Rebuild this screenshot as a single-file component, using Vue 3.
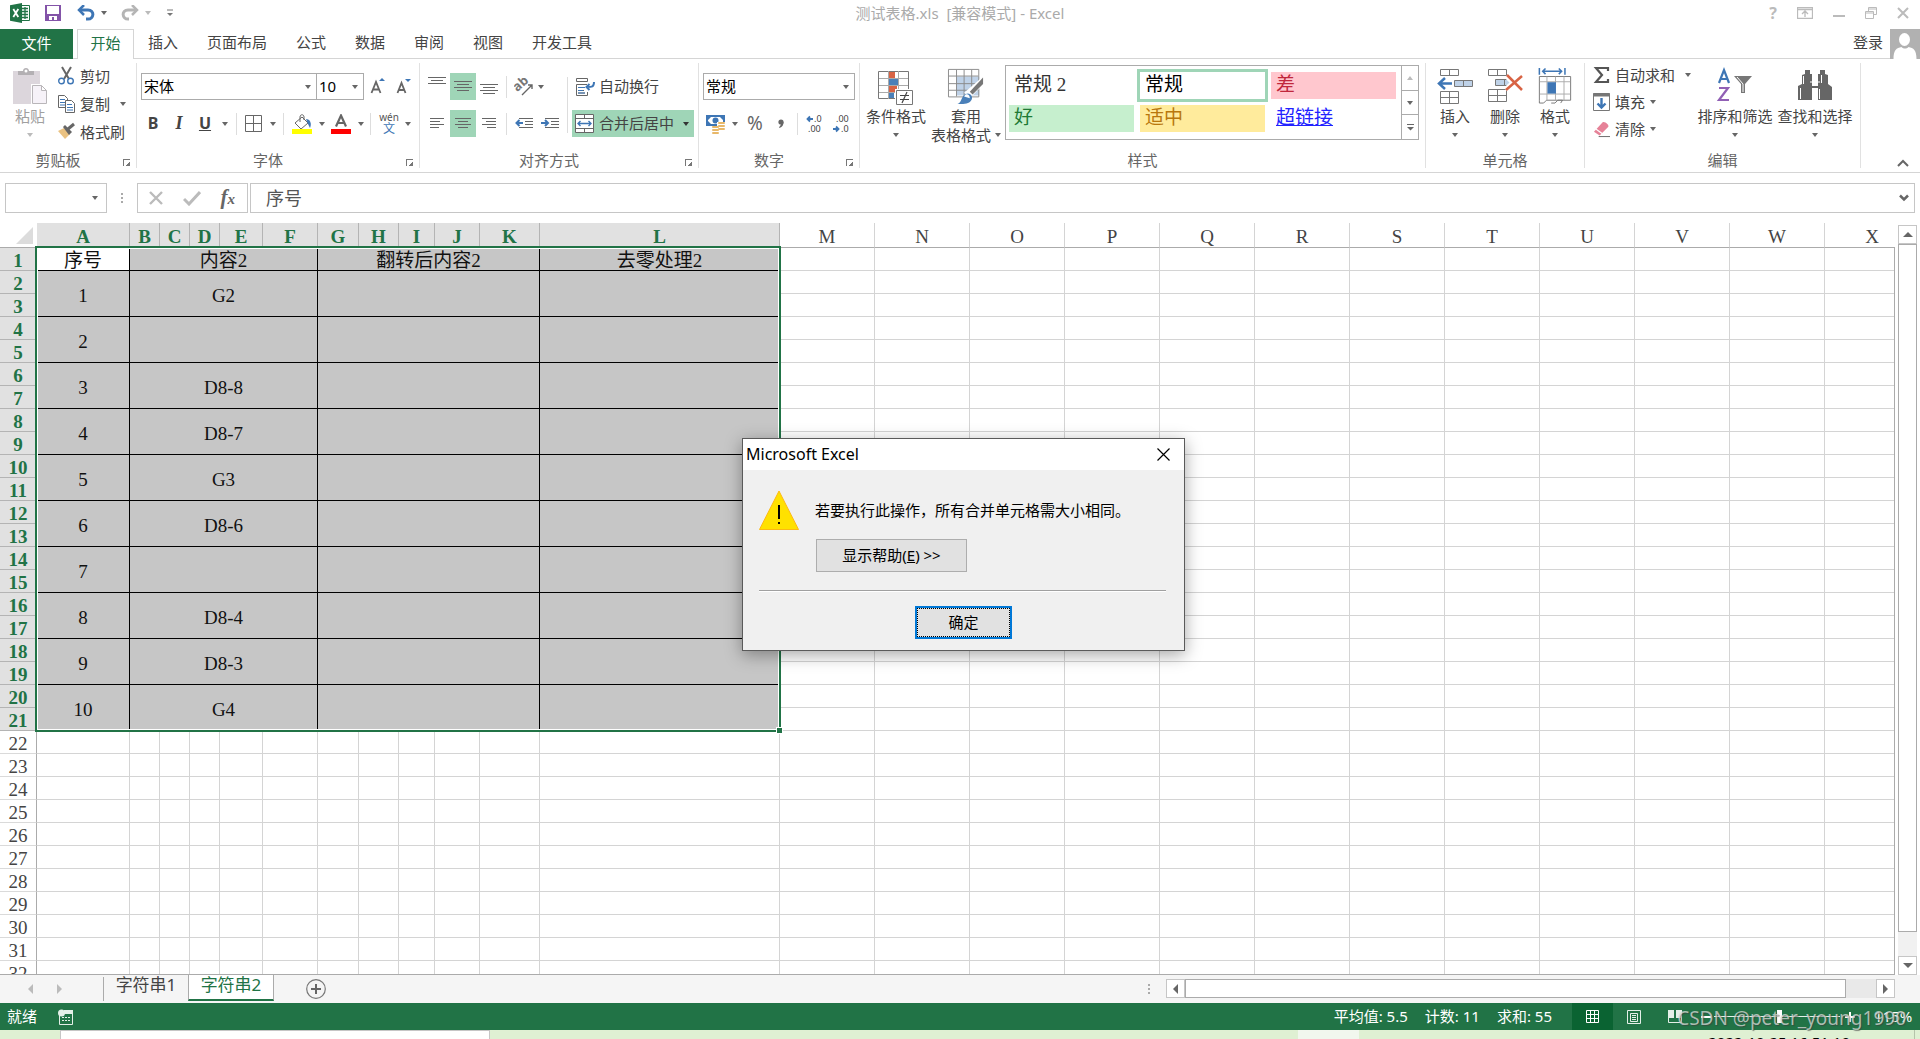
<script setup>
const tabs = ['开始', '插入', '页面布局', '公式', '数据', '审阅', '视图', '开发工具']

const columns = [
  ['A', 93], ['B', 30], ['C', 30], ['D', 30], ['E', 43], ['F', 55], ['G', 41], ['H', 40],
  ['I', 36], ['J', 45], ['K', 60], ['L', 240], ['M', 95], ['N', 95], ['O', 95], ['P', 95],
  ['Q', 95], ['R', 95], ['S', 95], ['T', 95], ['U', 95], ['V', 95], ['W', 95], ['X', 95],
].map(([name, width], i) => ({ name, width, selected: i < 12 }))

const values = ['G2', '', 'D8-8', 'D8-7', 'G3', 'D8-6', '', 'D8-4', 'D8-3', 'G4']

// Row 1 holds the captions; every record below it is merged over two rows.
const rows = Array.from({ length: 32 }, (_, i) => {
  const n = i + 1
  let merged = []
  if (n === 1) {
    merged = [
      { text: '序号', cols: 1, span: 1, active: true },
      { text: '内容2', cols: 5, span: 1 },
      { text: '翻转后内容2', cols: 5, span: 1 },
      { text: '去零处理2', cols: 1, span: 1 },
    ]
  } else if (n <= 21 && n % 2 === 0) {
    merged = [
      { text: String(n / 2), cols: 1, span: 2 },
      { text: values[n / 2 - 1], cols: 5, span: 2 },
      { text: '', cols: 5, span: 2 },
      { text: '', cols: 1, span: 2 },
    ]
  }
  return { n, merged, selected: n <= 21, blanks: n <= 21 ? 12 : 24 }
})
</script>

<template>
  <div class="app">
    <header class="titlebar">
      <div class="quick">
        <svg class="logo" width="20" height="20" viewBox="0 0 20 20">
          <path d="M11 2.500h8.500v15H11z" fill="#fff" stroke="#217346" />
          <path d="M12 5.500h6M12 8.500h6M12 11.500h6M12 14.500h6M15 4v12" stroke="#217346" stroke-width="1.300" />
          <path d="M0 2.200 12 0v20L0 17.800z" fill="#217346" />
          <path d="m3.300 6 5 8M8.300 6l-5 8" stroke="#fff" stroke-width="1.800" />
        </svg>
        <button class="qbtn" aria-label="保存">
          <svg width="16" height="16" viewBox="0 0 16 16"><path d="M0 0h16v16H0z" fill="#8353a8" /><path d="M2 1h12v8H2zM4 11h8v4H9v-3H7v3H4z" fill="#fff" /></svg>
        </button>
        <button class="qbtn undo" aria-label="撤消">
          <svg width="18" height="16" viewBox="0 0 18 16" fill="none" stroke="#3e76b5"><path d="M3 5h8c7 0 6 9 0 9H9" stroke-width="3" /><path d="M7 0 2 5l5 5" stroke-width="2.500" /></svg>
          <i class="caret"></i>
        </button>
        <button class="qbtn redo" aria-label="恢复">
          <svg width="18" height="16" viewBox="0 0 18 16" fill="none" stroke="#b5b5b5"><path d="M15 5H7c-7 0-6 9 0 9h1" stroke-width="3" /><path d="m11 0 5 5-5 5" stroke-width="2.500" /></svg>
          <i class="caret pale"></i>
        </button>
        <button class="qbtn" aria-label="自定义快速访问工具栏">
          <svg width="6" height="8" viewBox="0 0 6 8"><path d="M0 1h6" stroke="#777" /><path d="M0 4h6L3 7z" fill="#777" /></svg>
        </button>
      </div>
      <div class="doctitle">测试表格.xls&nbsp; [兼容模式] - Excel</div>
      <div class="window">
        <button aria-label="帮助" class="help">?</button>
        <button aria-label="功能区显示选项">
          <svg width="16" height="12" viewBox="0 0 16 12" fill="none" stroke="#bbb"><path d="M.5.500h15v11H.5zM0 2.500h16M8 10V4M5 7l3-3 3 3" stroke-width="1.300" /></svg>
        </button>
        <button aria-label="最小化"><svg width="12" height="12" viewBox="0 0 12 12"><path d="M0 9h12" stroke="#bbb" stroke-width="2" /></svg></button>
        <button aria-label="还原"><svg width="12" height="12" viewBox="0 0 12 12" fill="none" stroke="#bbb"><path d="M.5 4.500h8v7h-8zM.5 6h8M3.500 4V.500h8v7H9M3.500 2h8" /></svg></button>
        <button aria-label="关闭"><svg width="12" height="12" viewBox="0 0 12 12"><path d="m1 1 10 10M11 1 1 11" stroke="#bbb" stroke-width="2" /></svg></button>
      </div>
    </header>

    <nav class="tabs">
      <button class="file">文件</button>
      <button v-for="(t, i) in tabs" :key="t" class="tab" :class="{ active: i === 0 }">{{ t }}</button>
      <span class="grow"></span>
      <a href="#" class="login">登录</a>
      <svg class="avatar" width="30" height="30" viewBox="0 0 30 30"><path d="M0 0h30v30H0z" fill="#b1b1b1" /><ellipse cx="14.500" cy="10.500" rx="5.500" ry="6.500" fill="#fff" /><path d="M3.500 30c0-9 3-11 8-12 2 2 5 2 7 0 5 1 8 3 8 12z" fill="#fff" /></svg>
    </nav>

    <section class="ribbon">
      <div class="group clipboard">
        <div class="body">
          <button class="big paste">
            <svg width="36" height="36" viewBox="0 0 36 36"><path d="M1 3h27v33H1z" fill="#dcd6dc" /><path d="M6 7V3h5c0-4 6-4 6 0h5v4z" fill="#b3b0b3" /><circle cx="14" cy="3" r="1.500" fill="#fff" /><path d="M19 16h11l6 6v15H19z" fill="#fff" /><path d="M20.500 17.500h9l5 5v13h-14zM29.500 17.500v5h5" fill="#f6f2f8" stroke="#b9b6b9" /></svg>
            <span>粘贴</span><i class="caret pale"></i>
          </button>
          <div class="stack">
            <button class="line">
              <svg width="17" height="18" viewBox="0 0 17 18" fill="none"><path d="m4 0 7 12M13 0 6 12" stroke="#666" stroke-width="2" /><circle cx="3.500" cy="14" r="2.800" stroke="#3e76b5" stroke-width="1.400" /><circle cx="12.500" cy="14" r="2.800" stroke="#3e76b5" stroke-width="1.400" /></svg>
              <span>剪切</span>
            </button>
            <button class="line">
              <svg width="17" height="18" viewBox="0 0 17 18" fill="#fff" stroke="#666"><path d="M.5.500h6l3 3v9h-9z" /><path d="M2 4.500h5M2 7.500h5M2 10h5" stroke="#3e76b5" /><path d="M7.500 5.500h6l3 3v9h-9z" /><path d="M9 9.500h5M9 12.500h6M9 15h6" stroke="#3e76b5" /></svg>
              <span>复制</span><i class="caret far"></i>
            </button>
            <button class="line">
              <svg width="17" height="16" viewBox="0 0 17 16"><path d="m0 7 6-3 6 6-5 5z" fill="#eac282" /><path d="m5 3 2-2 7 7-3 3z" fill="#666" /><path d="m10 5 6-5" stroke="#666" stroke-width="3" /></svg>
              <span>格式刷</span>
            </button>
          </div>
        </div>
        <div class="label"><span>剪贴板</span><i class="launch"></i></div>
      </div>

      <div class="group font">
        <div class="body rows">
          <div class="row">
            <div class="combo wide"><select aria-label="字体"><option>宋体</option></select><i class="caret"></i></div>
            <div class="combo size"><select aria-label="字号"><option>10</option></select><i class="caret"></i></div>
            <button class="t w28" aria-label="增大字号"><svg width="16" height="18" viewBox="0 0 16 18"><path d="m1.500 15 4.500-11 4.500 11M3 11.500h6" fill="none" stroke="#666" stroke-width="1.800" /><path d="m9 3 3-3 3 3z" fill="#3e76b5" /></svg></button>
            <button class="t w24" aria-label="减小字号"><svg width="16" height="18" viewBox="0 0 16 18"><path d="m1.500 15 4-10 4 10M3 12h5" fill="none" stroke="#666" stroke-width="1.800" /><path d="m9 1 3 3 3-3z" fill="#3e76b5" /></svg></button>
          </div>
          <div class="row">
            <button class="t w24 bold">B</button>
            <button class="t w28 bold italic">I</button>
            <button class="t w24 bold under">U</button>
            <button class="t w16" aria-label="下划线选项"><i class="caret"></i></button>
            <i class="sep"></i>
            <button class="t w26" aria-label="边框"><svg width="17" height="17" viewBox="0 0 17 17"><path d="M.5.500h16v16H.5zM8.500 0v17M0 8.500h17" fill="none" stroke="#666" /></svg></button>
            <button class="t w14" aria-label="边框选项"><i class="caret"></i></button>
            <i class="sep"></i>
            <button class="t w30" aria-label="填充颜色"><svg width="20" height="20" viewBox="0 0 20 20"><path d="m3 9 7-6 6 6-7 6z" fill="#fff" stroke="#666" /><path d="M8 8V3c0-3 4-3 4 0v3" fill="none" stroke="#666" /><path d="M14 5c4 0 6 4 4 9l-2-4z" fill="#3e76b5" /><path d="M0 15h20v5H0z" fill="#ff0" /></svg></button>
            <button class="t w10" aria-label="填充选项"><i class="caret"></i></button>
            <button class="t w28" aria-label="字体颜色"><svg width="20" height="20" viewBox="0 0 20 20"><path d="m5 12.500 5-11 5 11M7 9h6" fill="none" stroke="#666" stroke-width="2.200" /><path d="M0 15h20v5H0z" fill="red" /></svg></button>
            <button class="t w12" aria-label="颜色选项"><i class="caret"></i></button>
            <i class="sep"></i>
            <button class="t w30 pinyin"><small>wén</small><b>文</b></button>
            <button class="t w8" aria-label="拼音选项"><i class="caret"></i></button>
          </div>
        </div>
        <div class="label"><span>字体</span><i class="launch"></i></div>
      </div>

      <div class="group align">
        <div class="body">
          <div class="rows">
            <div class="row">
              <button class="t w26 high" aria-label="顶端对齐"><svg width="18" height="8" viewBox="0 0 18 8"><path d="M0 .5h18M3 3.500h12M0 6.500h18" stroke="#666" /></svg></button>
              <button class="t w26 on" aria-label="垂直居中"><svg width="18" height="11" viewBox="0 0 18 11"><path d="M0 .5h18M3 3.500h12M0 6.500h18M3 9.500h12" stroke="#666" /></svg></button>
              <button class="t w26 low" aria-label="底端对齐"><svg width="18" height="11" viewBox="0 0 18 11"><path d="M0 .5h18M3 3.500h12M0 6.500h18M3 9.500h12" stroke="#666" /></svg></button>
              <i class="sep s9"></i>
              <button class="t w26" aria-label="方向"><svg width="20" height="18" viewBox="0 0 20 18"><text x="1" y="12" font-size="13" font-family="Noto Sans" font-weight="bold" fill="#777" transform="rotate(-42 5 10)">ab</text><path d="m8 17 10-10M14 7h4v4" fill="none" stroke="#666" stroke-width="1.400" /></svg></button>
              <button class="t w8" aria-label="方向选项"><i class="caret"></i></button>
            </div>
            <div class="row">
              <button class="t w26" aria-label="左对齐"><svg width="14" height="11" viewBox="0 0 14 11"><path d="M0 .5h14M0 3.500h10M0 6.500h14M0 9.500h9" stroke="#666" /></svg></button>
              <button class="t w26 on" aria-label="居中"><svg width="16" height="11" viewBox="0 0 16 11"><path d="M0 .5h16M3 3.500h10M0 6.500h16M3 9.500h10" stroke="#666" /></svg></button>
              <button class="t w26" aria-label="右对齐"><svg width="14" height="11" viewBox="0 0 14 11"><path d="M0 .5h14M4 3.500h10M0 6.500h14M5 9.500h9" stroke="#666" /></svg></button>
              <i class="sep s9"></i>
              <button class="t w26" aria-label="减少缩进"><svg width="18" height="11" viewBox="0 0 18 11"><path d="M4 .5h14M10 3.500h8M10 6.500h8M4 9.500h14" stroke="#666" /><path d="M8 5H2M4.500 2l-3 3 3 3" fill="none" stroke="#3e76b5" stroke-width="2" /></svg></button>
              <button class="t w26" aria-label="增加缩进"><svg width="18" height="11" viewBox="0 0 18 11"><path d="M4 .5h14M10 3.500h8M10 6.500h8M4 9.500h14" stroke="#666" /><path d="M0 5h6M4 2l3 3-3 3" fill="none" stroke="#3e76b5" stroke-width="2" /></svg></button>
            </div>
          </div>
          <i class="sep s9 tall"></i>
          <div class="rows">
            <button class="t text"><svg width="20" height="18" viewBox="0 0 20 18" fill="none" stroke="#666"><path d="M1.500.500h11v3h-11zM12 6.500H1.500v11h11V14M3 9.500h7M3 12.500h6M3 15h7" /><path d="M3 9.500h7M3 12.500h5M3 15h7" stroke="#3e76b5" /><path d="M19 4c0 5-2 5-7 5M14.500 6l-3 3 3 3" stroke="#3e76b5" stroke-width="2" /></svg><span>自动换行</span></button>
            <button class="t text on"><svg width="20" height="19" viewBox="0 0 20 19" fill="#fff" stroke="#666"><path d="M.5.500h18v18H.5zM0 4.500h19M0 14.500h19M9.500 0v4M9.500 15v4" /><path d="M3 9.500h13M5.500 7 3 9.500 5.500 12M13.500 7 16 9.500 13.500 12" fill="none" stroke="#3e76b5" stroke-width="1.400" /></svg><span>合并后居中</span><i class="caret dark"></i></button>
          </div>
        </div>
        <div class="label"><span>对齐方式</span><i class="launch"></i></div>
      </div>

      <div class="group number">
        <div class="body rows">
          <div class="combo full"><select aria-label="数字格式"><option>常规</option></select><i class="caret"></i></div>
          <div class="row">
            <button class="t w26" aria-label="会计数字格式"><svg width="20" height="20" viewBox="0 0 20 20"><path d="M0 1h19v11H0z" fill="#3e76b5" /><path d="M2 3h15v7H2z" fill="#fff" /><path d="M2 3h3L2 6zM17 3h-3l3 3zM2 10h3L2 7z" fill="#3e76b5" /><circle cx="9.500" cy="6.500" r="3" fill="#3e76b5" /><path d="M11 8h8v9h-5v3H6v-8h5z" fill="#fff" /><g fill="#e8b86a"><rect x="12" y="8" width="7" height="2" rx="1" /><rect x="12" y="11" width="7" height="2" rx="1" /><rect x="12" y="14" width="7" height="2" rx="1" /><rect x="6" y="12" width="7" height="2" rx="1" /><rect x="6" y="15" width="7" height="2" rx="1" /><rect x="6" y="18" width="7" height="2" rx="1" /></g></svg></button>
            <button class="t w12" aria-label="货币选项"><i class="caret"></i></button>
            <button class="t w28 percent">%</button>
            <button class="t w24" aria-label="千位分隔样式"><svg width="6" height="10" viewBox="0 0 6 10"><circle cx="3" cy="3" r="2.600" fill="#666" /><path d="M5.500 3c0 3-1 5-4 6l-.5-1c1-.5 2-2 2-4z" fill="#666" /></svg></button>
            <i class="sep s9"></i>
            <button class="t w26" aria-label="增加小数位数"><svg class="deci" width="18" height="18" viewBox="0 0 18 18"><text x="8" y="7">.0</text><text x="2" y="17">.00</text><path d="M7 4H2M4 1.500 1.500 4 4 6.500" fill="none" stroke="#3e76b5" stroke-width="1.800" /></svg></button>
            <button class="t w26" aria-label="减少小数位数"><svg class="deci" width="18" height="18" viewBox="0 0 18 18"><text x="4" y="7">.00</text><text x="9" y="17">.0</text><path d="M1 14h5M4 11.500 6.500 14 4 16.500" fill="none" stroke="#3e76b5" stroke-width="1.800" /></svg></button>
          </div>
        </div>
        <div class="label"><span>数字</span><i class="launch"></i></div>
      </div>

      <div class="group styles">
        <div class="body">
          <button class="big w72">
            <svg width="38" height="36" viewBox="0 0 38 36"><path d="M1.500 3.500h30v27h-30z" fill="#fff" stroke="#777" /><path d="M2 10.500h29M2 17.500h29M2 24.500h29M11.500 3v28M21.500 3v28" stroke="#aaa" /><path d="M12 4h6v6h-6zM12 18h8v6h-8z" fill="#d86344" /><path d="M12 11h9v6h-9zM12 25h5v5h-5z" fill="#4a80b9" /><path d="M18 21h20v15H18z" fill="#fff" /><path d="M19.500 22.500h16v14h-16z" fill="#fff" stroke="#777" /><path d="M23 27.500h9M23 31.500h9M30 24l-5 11" stroke="#444" stroke-width="1.200" /></svg>
            <span>条件格式</span><i class="caret"></i>
          </button>
          <button class="big w68">
            <svg width="38" height="38" viewBox="0 0 38 38"><path d="M9 9h24v20H9z" fill="#bfd2e8" /><path d="M.5 1.500h32v29H.5zM9 2v28M17 2v28M25 2v28M1 8.500h31M1 16.500h31M1 23.500h31" fill="none" stroke="#8a8a8a" /><path d="m37 9 1 8-14 14-7-5z" fill="#fff" /><path d="m37 10-14 15 3 3 11-11z" fill="#777" /><path d="M10 38c5-1 4-11 11-11 7 1 6 11-5 11z" fill="#4a80b9" /><path d="M17 30c2-4 6-2 6 2z" fill="#fff" /></svg>
            <span>套用</span><span class="second">表格格式<i class="caret"></i></span>
          </button>
          <div class="gallery">
            <div class="swatches">
              <button>常规 2</button><button class="current">常规</button><button class="bad">差</button>
              <button class="good">好</button><button class="neutral">适中</button><button class="linked">超链接</button>
            </div>
            <div class="spin">
              <button aria-label="上一行"><i class="caret up pale"></i></button>
              <button aria-label="下一行"><i class="caret"></i></button>
              <button aria-label="其他样式"><svg width="7" height="7" viewBox="0 0 7 7"><path d="M0 .5h7" stroke="#666" /><path d="M0 3h7L3.500 6.500z" fill="#666" /></svg></button>
            </div>
          </div>
        </div>
        <div class="label"><span>样式</span></div>
      </div>

      <div class="group cells">
        <div class="body">
          <button class="big w50">
            <svg width="36" height="36" viewBox="0 0 36 36" fill="#fff" stroke="#777"><path d="M3.500 1.500h18v6h-18zM12.500 2v5M3.500 23.500h18v12h-18zM12.500 23v12M3 29.500h18" /><path d="M17.500 12.500h18v6h-18zM26.500 13v5" fill="#bfd2e8" /><path d="M15 15.500H3M8 10l-6 5.500L8 21" fill="none" stroke="#3e76b5" stroke-width="2.500" /></svg>
            <span>插入</span><i class="caret"></i>
          </button>
          <button class="big w50">
            <svg width="36" height="36" viewBox="0 0 36 36" fill="#fff" stroke="#777"><path d="M1.500 1.500h18v6h-18zM10.500 2v5M1.500 21.500h18v12h-18zM10.500 21v12M1 27.500h18" /><path d="M8.500 11.500h16v6h-16zM17.500 12v5" fill="#bfd2e8" /><path d="m20 8 15 15M34 8 19 22" stroke="#fff" stroke-width="6" /><path d="m20 7 15 15M35 8 19 22" stroke="#d86344" stroke-width="2.500" /></svg>
            <span>删除</span><i class="caret"></i>
          </button>
          <button class="big w50">
            <svg width="36" height="38" viewBox="0 0 36 38" fill="#fff" stroke="#777"><path d="M1.500 34v-25h33v25H9l-3 3H1.500zM14 37h4l3-3h5l-2 3" /><path d="M2 14.500h32M2 27.500h32M9.500 9v25M18.500 9v25M27.500 9v25" stroke="#aaa" /><path d="M10 15h9v12h-9z" fill="#3e76b5" stroke="none" /><path d="M1.500 0v7M28.500 0v7M5 3.500h20M8 .5l-3 3 3 3M22 .5l3 3-3 3" fill="none" stroke="#3e76b5" stroke-width="1.600" /></svg>
            <span>格式</span><i class="caret"></i>
          </button>
        </div>
        <div class="label"><span>单元格</span></div>
      </div>

      <div class="group editing">
        <div class="body">
          <div class="stack">
            <button class="line"><svg width="17" height="18" viewBox="0 0 17 18"><path d="M15 5V2H3l6 7-6 7h12v-3" fill="none" stroke="#555" stroke-width="2.200" /></svg><span>自动求和</span><i class="caret far"></i></button>
            <button class="line"><svg width="17" height="18" viewBox="0 0 17 18"><path d="M.5.500h16v17H.5z" fill="#fff" stroke="#777" /><path d="M0 2h17" stroke="#777" stroke-width="3" /><path d="M8.500 5v9M4.500 10.500l4 4 4-4" fill="none" stroke="#3e76b5" stroke-width="2.400" /></svg><span>填充</span><i class="caret"></i></button>
            <button class="line"><svg width="18" height="18" viewBox="0 0 18 18"><path d="m1 12 9-10c2-2 8 3 6 5L7 16z" fill="#e68298" /><path d="m3 9 7 5" stroke="#fff" stroke-width="1.300" /><path d="M6 17h12" stroke="#666" /></svg><span>清除</span><i class="caret"></i></button>
          </div>
          <button class="big w80">
            <svg width="36" height="36" viewBox="0 0 36 36" fill="none"><path d="m2 15 5-13 5 13M4 11h7" stroke="#3e76b5" stroke-width="2.200" /><path d="M2 20h9L2 32h10" stroke="#9160b5" stroke-width="2.200" /><path d="M17 8h18l-7 8v9h-4v-9z" fill="#777" /><path d="m20 9 6 7v8" stroke="#fff" /></svg>
            <span>排序和筛选</span><i class="caret"></i>
          </button>
          <button class="big w80">
            <svg width="36" height="36" viewBox="0 0 36 36" fill="#666"><path d="M8 2h5v4h2v12h6V6h2V2h5v4l3 1v9l4 3v13H21V20h-6v12H1V18l4-2V7l3-1z" /><path d="M13 14h10M3.500 20v11M22.500 21v10M6.500 8v8M24.500 7v8" stroke="#fff" /><path d="M15 6h6v6h-6z" fill="#fff" /></svg>
            <span>查找和选择</span><i class="caret"></i>
          </button>
        </div>
        <div class="label"><span>编辑</span></div>
      </div>
      <button class="collapse" aria-label="折叠功能区"><svg width="12" height="8" viewBox="0 0 12 8"><path d="m1 7 5-5 5 5" fill="none" stroke="#666" stroke-width="2" /></svg></button>
    </section>

    <section class="formula">
      <div class="namebox"><input aria-label="名称框" /><i class="caret"></i></div>
      <i class="dots"></i>
      <div class="fx">
        <button aria-label="取消"><svg width="16" height="16" viewBox="0 0 16 16"><path d="m2 2 12 12M14 2 2 14" stroke="#bbb" stroke-width="2.400" /></svg></button>
        <button aria-label="输入"><svg width="18" height="16" viewBox="0 0 18 16"><path d="m1 9 5 5L17 2" fill="none" stroke="#bbb" stroke-width="3" /></svg></button>
        <button class="fn">f<sub>x</sub></button>
      </div>
      <div class="entry">
        <input aria-label="编辑栏" value="序号" />
        <svg width="10" height="8" viewBox="0 0 10 8"><path d="m1 1.500 4 4 4-4" fill="none" stroke="#666" stroke-width="2.500" /></svg>
      </div>
    </section>

    <main class="sheet">
      <div class="grid">
        <table>
          <colgroup>
            <col class="rowhead" />
            <col v-for="c in columns" :key="c.name" :style="{ width: c.width + 'px' }" />
          </colgroup>
          <thead>
            <tr>
              <th class="corner"><svg width="17" height="17" viewBox="0 0 17 17"><path d="M17 0v17H0z" fill="#dcdcdc" /></svg></th>
              <th v-for="c in columns" :key="c.name" :class="{ sel: c.selected }">{{ c.name }}</th>
            </tr>
          </thead>
          <tbody>
            <tr v-for="r in rows" :key="r.n">
              <th :class="{ sel: r.selected }">{{ r.n }}</th>
              <td v-for="(m, i) in r.merged" :key="'m' + i" class="picked" :class="{ active: m.active, heading: r.n === 1 }" :colspan="m.cols" :rowspan="m.span">{{ m.text }}</td>
              <td v-for="b in r.blanks" :key="b"></td>
            </tr>
          </tbody>
        </table>
        <div class="selection"><i></i></div>
      </div>
      <div class="vscroll">
        <button aria-label="向上滚动"><i class="arrow up"></i></button>
        <div class="thumb"></div>
        <button aria-label="向下滚动"><i class="arrow down"></i></button>
      </div>
    </main>

    <footer class="sheetbar">
      <div class="navs"><i class="arrow left"></i><i class="arrow right"></i></div>
      <button class="sheettab">字符串1</button>
      <button class="sheettab current">字符串2</button>
      <button class="plus" aria-label="新工作表"><svg width="20" height="20" viewBox="0 0 20 20"><circle cx="10" cy="10" r="9.300" fill="none" stroke="#777" stroke-width="1.200" /><path d="M10 5v10M5 10h10" stroke="#666" stroke-width="2" /></svg></button>
      <span class="grow"></span>
      <i class="dots"></i>
      <div class="hscroll">
        <button aria-label="向左滚动"><i class="arrow left"></i></button>
        <div class="thumb"></div>
        <button aria-label="向右滚动"><i class="arrow right"></i></button>
      </div>
    </footer>

    <footer class="status">
      <span class="ready">就绪</span>
      <svg width="16" height="16" viewBox="0 0 16 16"><path d="M1.500 3v12.500h13V4.500" fill="none" stroke="#e4efe8" /><path d="M6 1h9v4H6z" fill="#e4efe8" /><circle cx="3.500" cy="4" r="3.500" fill="#e4efe8" /><path d="M4 8.500h9M4 11.500h9" stroke="#e4efe8" stroke-dasharray="2 1" /></svg>
      <span class="grow"></span>
      <span class="stat">平均值: 5.5</span><span class="stat">计数: 11</span><span class="stat">求和: 55</span>
      <button class="view on" aria-label="普通"><svg width="14" height="14" viewBox="0 0 14 14"><path d="M.5.500h12v12H.5zM4.500 0v13M8.500 0v13M0 4.500h13M0 8.500h13" fill="none" stroke="#fff" /></svg></button>
      <button class="view" aria-label="页面布局"><svg width="14" height="14" viewBox="0 0 14 14"><path d="M.5.500h13v13H.5zM3.500 3.500h7v8h-7zM5 5.500h4M5 7.500h4M5 9.500h4" fill="none" stroke="#e4efe8" /></svg></button>
      <button class="view" aria-label="分页预览"><svg width="14" height="14" viewBox="0 0 14 14"><path d="M0 0h6v8H0zM8 0h6v8H8z" fill="#e4efe8" /><path d="M.5 0v12.500h13V0" fill="none" stroke="#e4efe8" /></svg></button>
      <button class="zoombtn" aria-label="缩小"><svg width="10" height="10" viewBox="0 0 10 10"><path d="M0 5h10" stroke="#fff" stroke-width="2" /></svg></button>
      <input class="zoom" type="range" min="0" max="100" value="52" aria-label="显示比例" />
      <button class="zoombtn" aria-label="放大"><svg width="10" height="10" viewBox="0 0 10 10"><path d="M0 5h10M5 0v10" stroke="#fff" stroke-width="2" /></svg></button>
      <span class="percentage">115%</span>
      <span class="watermark">CSDN @peter_young1990</span>
    </footer>

    <div class="taskbar">
      <div class="search"></div><div class="slot"></div><time>2022-10-25 16:51:19</time><i class="edge"></i>
    </div>

    <div class="dialog" role="alertdialog" aria-labelledby="dlg-title" aria-describedby="dlg-text">
      <div class="dlghead">
        <span id="dlg-title">Microsoft Excel</span>
        <button aria-label="关闭"><svg width="13" height="13" viewBox="0 0 13 13"><path d="m.5.500 12 12M12.500.500l-12 12" stroke="#000" stroke-width="1.200" /></svg></button>
      </div>
      <div class="dlgbody">
        <svg width="40" height="40" viewBox="0 0 40 40"><path d="M20 1 39.500 39.500H.5z" fill="#ffe100" stroke="#fdb913" /><path d="M20 15v14M20 32v2" stroke="#000" stroke-width="2" /></svg>
        <div class="message">
          <p id="dlg-text">若要执行此操作，所有合并单元格需大小相同。</p>
          <button class="showhelp">显示帮助(<u>E</u>) &gt;&gt;</button>
        </div>
      </div>
      <div class="dlgfoot"><button class="ok"><span>确定</span></button></div>
    </div>
  </div>
</template>

<style>
body { margin: 0; background: #fff; }
</style>

<style scoped>
.app { position: relative; display: flex; flex-direction: column; height: 100vh; overflow: hidden; font: 15px/20px "Noto Sans", "Noto Sans CJK SC", sans-serif; color: #444; background: #fff; }
.app *, .app *::before, .app *::after { box-sizing: border-box; }
button, input, select { font: inherit; color: inherit; background: none; border: 0; border-radius: 0; padding: 0; margin: 0; outline: 0; }
svg { display: block; flex: none; }
i { flex: none; }
.grow { flex: 1; }
.caret { display: block; width: 0; height: 0; border: 3px solid transparent; border-top: 4px solid #666; border-bottom: 0; }
.caret.pale { border-top-color: #bbb; }
.caret.dark { border-top-color: #333; }
.caret.up { border-top: 0; border-bottom: 4px solid #bbb; }
.dots { width: 2px; height: 11px; background: repeating-linear-gradient(#aaa 0 2px, transparent 2px 4px); }

.titlebar { flex: none; display: grid; grid-template-columns: 1fr auto 1fr; height: 29px; color: #aaa; }
.quick { display: flex; align-items: center; padding: 0 0 3px 10px; }
.qbtn { display: flex; align-items: center; gap: 6px; margin-left: 15px; }
.undo { margin-left: 16px; }
.redo { margin: 0 16px 0 14px; }
.redo + .qbtn { margin-left: 0; }
.doctitle { line-height: 26px; white-space: pre; }
.window { display: flex; align-items: center; justify-content: flex-end; gap: 20px; padding: 0 11px 3px 0; }
.help { font-weight: bold; font-size: 16px; color: #bbb; }

.tabs { flex: none; display: flex; height: 30px; border-bottom: 1px solid #d5d5d5; }
.file { width: 73px; height: 30px; margin-right: 4px; padding-bottom: 2px; color: #fff; background: #217346; }
.tab { padding: 0 15px 4px 14px; height: 29px; }
.tab.active { height: 30px; width: 57px; padding: 0 0 4px; background: #fff; border: 1px solid #d5d5d5; border-bottom: 0; color: #217346; }
.login { color: #444; text-decoration: none; line-height: 26px; margin-right: 7px; }

.ribbon { flex: none; display: flex; padding: 4px 0; height: 114px; border-bottom: 1px solid #d5d5d5; }
.group { display: flex; flex-direction: column; height: 105px; border-right: 1px solid #e1e1e1; }
.body { display: flex; flex: 1; align-items: flex-start; }
.label { display: flex; align-items: center; height: 20px; line-height: 24px; color: #666; }
.label span { flex: 1; text-align: center; padding-top: 4px; }
.launch { width: 7px; height: 7px; margin: 8px 6px 0 7px; border-top: 1px solid #777; border-left: 1px solid #777; background: linear-gradient(135deg, transparent 60%, #777 60%); }
.clipboard { width: 137px; }
.font { width: 283px; }
.align { width: 279px; }
.number { width: 161px; }
.styles { width: 566px; }
.cells { width: 159px; }
.editing { width: 276px; }
.big { display: flex; flex-direction: column; align-items: center; padding-top: 5px; white-space: nowrap; }
.big svg { height: 36px; margin-bottom: 2px; overflow: visible; }
.big > .caret { margin-top: 7px; }
.big .second { display: flex; align-items: center; gap: 4px; line-height: 18px; }
.paste { width: 50px; margin: 0 8px 0 5px; color: #a0a0a0; }
.stack { display: flex; flex-direction: column; gap: 8px; padding-top: 3px; }
.line { display: flex; align-items: center; gap: 5px; height: 20px; white-space: nowrap; }
.line svg { width: 17px; overflow: visible; }
.clipboard .stack { margin-left: -5px; }
.caret.far { margin-left: 5px; }
.rows { display: flex; flex-direction: column; gap: 10px; padding-top: 10px; }
.body.rows { padding-left: 4px; }
.align .body { padding-left: 4px; }
.row { display: flex; align-items: center; height: 27px; }
.t { display: flex; align-items: center; justify-content: center; flex: none; height: 27px; }
.w8 { width: 8px; } .w10 { width: 10px; } .w12 { width: 12px; } .w14 { width: 14px; } .w16 { width: 16px; }
.w24 { width: 24px; } .w26 { width: 26px; } .w28 { width: 28px; } .w30 { width: 30px; } .w50 { width: 50px; }
.w68 { width: 68px; } .w72 { width: 72px; } .w80 { width: 80px; }
.on { background: #9fd5b7; }
.high { align-items: flex-start; padding-top: 4px; }
.low { align-items: flex-end; padding-bottom: 5px; }
.bold { font-weight: bold; font-size: 16px; padding-bottom: 2px; }
.italic { font-style: italic; font-family: "Liberation Serif", serif; font-size: 18px; }
.under { text-decoration: underline; }
.sep { width: 7px; height: 22px; background: linear-gradient(#ddd, #ddd) center / 1px 100% no-repeat; }
.s9 { width: 9px; }
.tall { height: 56px; margin-top: 14px; }
.text { width: 122px; justify-content: flex-start; padding-left: 3px; gap: 4px; white-space: nowrap; }
.text span { padding-bottom: 2px; }
.text .caret { margin-left: 5px; }
.pinyin { flex-direction: column; color: #555; }
.pinyin small { font-size: 10px; line-height: 10px; }
.pinyin b { font-size: 12px; line-height: 14px; font-weight: normal; color: #3e76b5; }
.percent { font-size: 19px; color: #666; padding-bottom: 2px; }
.deci { font: 9px "Noto Sans", sans-serif; fill: #444; overflow: visible; }
.combo { display: flex; align-items: center; height: 27px; border: 1px solid #ababab; color: #000; }
.combo select { appearance: none; flex: 1; min-width: 0; height: 25px; padding: 0 0 2px 2px; }
.combo .caret { margin-right: 5px; }
.wide { width: 176px; }
.size { width: 48px; margin-left: -1px; }
.full { width: 152px; }
.gallery { display: flex; width: 414px; height: 75px; margin: 2px 0 0 5px; border: 1px solid #ababab; }
.swatches { flex: 1; display: grid; grid-template-columns: repeat(3, 125px); gap: 6px; align-content: start; padding: 6px 3px; font: 19px/27px "Liberation Serif", "Noto Sans CJK SC", serif; }
.swatches button { height: 27px; padding: 0 0 2px 5px; line-height: 25px; text-align: left; color: #333; white-space: pre; }
.swatches .current { color: #000; outline: 3px solid #9fd5b7; }
.swatches .bad { background: #ffc7ce; color: #c0283c; }
.swatches .good { background: #c6efce; color: #1f7a35; }
.swatches .neutral { background: #ffeb9c; color: #b8770c; }
.swatches .linked { color: #22f; text-decoration: underline; }
.spin { width: 17px; border-left: 1px solid #ababab; display: flex; flex-direction: column; }
.spin button { flex: 1; display: flex; align-items: center; justify-content: center; border-top: 1px solid #ababab; }
.spin button:first-child { border-top: 0; }
.cells .body { padding-left: 4px; }
.editing .body { padding-left: 8px; }
.editing .stack { width: 102px; padding-top: 2px; gap: 7px; }
.editing .line .caret { margin-left: 0; }
.editing .line .caret.far { margin-left: 5px; }
.collapse { margin: auto 11px 0 auto; padding-bottom: 1px; }

.formula { flex: none; display: flex; align-items: center; height: 50px; padding: 0 5px 0; }
.namebox, .fx, .entry { display: flex; align-items: center; height: 30px; border: 1px solid #c6c6c6; }
.namebox { width: 102px; }
.namebox input { flex: 1; min-width: 0; }
.namebox .caret { margin-right: 8px; }
.formula .dots { margin: 0 14px; }
.fx { width: 111px; justify-content: space-between; padding: 0 12px 0 10px; margin-right: 2px; }
.fn { font: italic bold 21px/24px "Liberation Serif", serif; color: #666; }
.fn sub { font-size: 15px; vertical-align: baseline; }
.entry { flex: 1; padding-right: 5px; }
.entry input { flex: 1; padding: 0 0 2px 15px; color: #555; font: 18px/26px "Noto Sans CJK SC", sans-serif; }

.sheet { flex: 1; min-height: 0; display: flex; }
.grid { position: relative; flex: 1; min-width: 0; overflow: hidden; border-bottom: 1px solid #ababab; }
.grid::after { content: ""; position: absolute; top: 24px; right: 0; bottom: 0; width: 1px; background: #ababab; }
table { table-layout: fixed; width: 1920px; border-collapse: separate; border-spacing: 0; font: 19px/18px "Liberation Serif", "Noto Sans CJK SC", serif; }
.rowhead { width: 37px; }
tr { height: 23px; }
thead tr { height: 25px; }
th { padding: 4px 0 0; font-weight: normal; color: #444; border-bottom: 1px solid #dadada; border-right: 1px solid #ababab; }
thead th { border-bottom-color: #ababab; border-right-color: #d4d4d4; }
th.sel { background: #e1e1e1; color: #217346; font-weight: bold; border-color: #b4b4b4; }
.corner { padding: 0; border-right-color: #fff; }
.corner svg { margin-left: 16px; }
td { padding: 0; text-align: center; color: #111; border-right: 1px solid #d4d4d4; border-bottom: 1px solid #d4d4d4; }
td.picked { background: #c6c6c6; border-color: #000; padding-top: 4px; }
td.picked.heading { padding-top: 3px; }
td.picked.active { background: #fff; }
.selection { position: absolute; left: 35px; top: 23px; width: 746px; height: 486px; border: 2px solid #217346; box-shadow: inset 0 0 0 1px #fff; }
.selection i { position: absolute; right: -4px; bottom: -4px; width: 7px; height: 7px; background: #217346; border: 1px solid #fff; }
.vscroll { width: 25px; padding: 2px 3px 0; display: flex; flex-direction: column; }
.vscroll button { flex: none; height: 19px; border: 1px solid #c6c6c6; background: #fff; display: flex; align-items: center; justify-content: center; }
.vscroll .thumb { flex: 1; margin-bottom: 24px; border: 1px solid #ababab; background: #fff; box-shadow: 0 24px #f1f1f1; }
.arrow { display: block; border: 5px solid transparent; width: 0; height: 0; }
.arrow.up { border-top: 0; border-bottom-color: #666; }
.arrow.down { border-bottom: 0; border-top-color: #666; }
.arrow.left { border-left: 0; border-right-color: #666; }
.arrow.right { border-right: 0; border-left-color: #666; }

.sheetbar { flex: none; display: flex; height: 28px; background: #f5f5f5; padding-right: 25px; }
.navs { display: flex; align-items: center; gap: 24px; width: 104px; height: 24px; margin-top: 2px; padding-left: 28px; border-right: 1px solid #ababab; }
.navs .arrow.left { border-right-color: #bbb; }
.navs .arrow.right { border-left-color: #bbb; }
.sheettab { width: 84px; padding-bottom: 8px; font-size: 17px; }
.sheettab.current { width: 86px; height: 27px; margin-top: -1px; padding-bottom: 4px; background: #fff; color: #217346; border: 1px solid #ababab; border-width: 0 1px 2px; border-bottom-color: #217346; }
.plus { margin-left: 32px; }
.sheetbar .dots { margin: 9px 16px 0 0; }
.hscroll { display: flex; width: 729px; margin-top: 4px; height: 19px; background: #e9e9e9; }
.hscroll button { flex: none; width: 19px; border: 1px solid #c6c6c6; background: #fff; display: flex; align-items: center; justify-content: center; }
.hscroll .thumb { flex: 1; margin-right: 30px; border: 1px solid #ababab; background: #fff; }

.status { flex: none; position: relative; display: flex; align-items: center; height: 27px; background: #217346; color: #fff; padding: 0 10px 0 7px; white-space: nowrap; }
.status > span { padding-bottom: 2px; }
.ready { margin-right: 21px; }
.stat { margin-right: 17px; }
.view.on { margin-left: 3px; }
.view { width: 41px; height: 27px; display: flex; align-items: center; justify-content: center; }
.view.on { background: #0a6332; }
.zoombtn { width: 10px; margin-left: 6px; }
.zoom { appearance: none; width: 126px; height: 14px; margin: 0 3px; background: linear-gradient(#e4efe8, #e4efe8) center / 100% 1px no-repeat; }
.zoom + .zoombtn { margin-left: 2px; }
.zoom::-webkit-slider-thumb { appearance: none; width: 5px; height: 13px; background: #fff; }
.percentage { width: 36px; margin-left: 19px; }
.watermark { position: absolute; right: 14px; top: 2px; font: 19px/26px "Noto Sans", sans-serif; color: rgba(215, 220, 216, .75); text-shadow: 1px 1px 1px rgba(60, 60, 60, .6); }

.taskbar { flex: none; display: flex; height: 9px; overflow: hidden; background: #dff0d3; }
.search { width: 430px; margin-left: 60px; border: 1px solid #c6c6c6; border-bottom: 0; background: #fff; }
.slot { width: 61px; margin-left: 808px; background: #f1f7ee; }
time { margin-left: auto; padding-top: 4px; margin-right: 64px; color: #000; line-height: 16px; white-space: nowrap; }
.edge { width: 1px; margin-right: 5px; background: #b5c4ab; }

.dialog { position: absolute; left: 742px; top: 438px; width: 443px; border: 1px solid #5a5a5a; background: #f0f0f0; color: #000; box-shadow: 0 4px 16px rgba(0, 0, 0, .35); }
.dlghead { display: flex; align-items: center; justify-content: space-between; height: 31px; padding: 0 14px 0 3px; background: #fff; }
.dlghead span { font-size: 16px; padding-bottom: 2px; }
.dlgbody { display: flex; margin: 20px 18px 0 16px; padding-bottom: 18px; border-bottom: 1px solid #a0a0a0; box-shadow: 0 1px #fff; }
.dlgbody svg { margin-right: 16px; }
.message p { margin: 10px 0 19px; line-height: 20px; white-space: nowrap; }
.showhelp { width: 151px; height: 33px; margin-left: 1px; padding-bottom: 2px; background: #e1e1e1; border: 1px solid #adadad; }
.dlgfoot { display: flex; justify-content: center; padding: 15px 0 11px; }
.ok { width: 97px; height: 33px; background: #e1e1e1; border: 2px solid #0078d7; }
.ok span { display: block; height: 29px; line-height: 26px; border: 1px dotted #000; }
</style>
